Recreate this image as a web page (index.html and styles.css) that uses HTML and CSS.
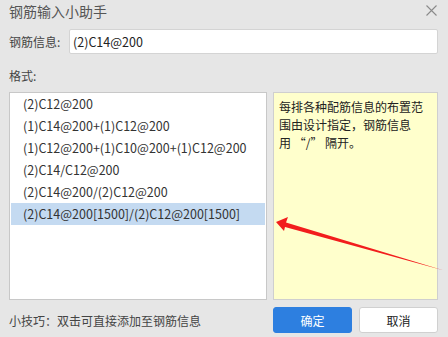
FILE: index.html
```html
<!DOCTYPE html>
<html lang="zh-CN">
<head>
  <meta charset="UTF-8">
  <title>钢筋输入小助手</title>
  <link rel="stylesheet" href="styles.css">
</head>
<body>
<div class="dialog">

  <!-- title bar -->
  <div class="title-bar">
    <span class="title">钢筋输入小助手</span>
    <svg class="close" width="11" height="11" viewBox="0 0 11 11">
      <path d="M0.5 0.5 L10.5 10.5 M10.5 0.5 L0.5 10.5" stroke="#8a8a8a" stroke-width="1.1" fill="none"/>
    </svg>
  </div>

  <div class="info-row">
    <label>钢筋信息:</label>
    <div class="input-box">(2)C14@200</div>
  </div>

  <div class="format-label">格式:</div>

  <div class="main">
    <ul class="format-list">
      <li>(2)C12@200</li>
      <li>(1)C14@200+(1)C12@200</li>
      <li>(1)C12@200+(1)C10@200+(1)C12@200</li>
      <li>(2)C14/C12@200</li>
      <li>(2)C14@200/(2)C12@200</li>
      <li class="selected">(2)C14@200[1500]/(2)C12@200[1500]</li>
    </ul>
    <div class="hint-box">每排各种配筋信息的布置范围由设计指定，钢筋信息<br>用 “/” 隔开。</div>

    <!-- red annotation arrow -->
    <svg class="arrow" width="190" height="70" viewBox="0 0 190 70">
      <path d="M11 10 L23 5 L21 10.5 L179 58.5 L20 15 L19 19 Z" fill="#f21d1d"/>
    </svg>
  </div>

  <div class="footer">
    <span class="tip">小技巧：双击可直接添加至钢筋信息</span>
    <div class="buttons">
      <button class="btn primary">确定</button>
      <button class="btn">取消</button>
    </div>
  </div>

</div>
</body>
</html>
```
FILE: styles.css
```css
body { margin: 0; background: #e6e6e6; font-family: "Noto Sans CJK SC", "Noto Sans", sans-serif; font-size: 12px; color: #333; }
.dialog { width: 448px; height: 337px; box-sizing: border-box; padding: 0 10px 0 9px; }

.title-bar { height: 21px; display: flex; align-items: center; justify-content: space-between; }
.title { color: #555; font-size: 14px; }
.close { margin-right: 1px; }

.info-row { display: flex; align-items: center; height: 25px; margin-top: 8px; }
.info-row label { width: 60px; color: #444; }
.input-box {
  flex: 1; height: 25px; box-sizing: border-box; background: #fff; border: 1px solid #d4d4d4;
  border-radius: 2px; padding: 0 3px; line-height: 23px; color: #222; font-size: 12.5px;
}

.format-label { margin-top: 13px; height: 25px; color: #444; }

.main { position: relative; display: flex; gap: 6px; height: 208px; }
.format-list {
  list-style: none; margin: 0; padding: 0 1px; width: 258px; box-sizing: border-box;
  background: #fff; border: 1px solid #c8c8c8;
}
.format-list li { height: 22px; line-height: 22px; padding-left: 12px; color: #333; white-space: nowrap; font-size: 12.5px; }
.format-list li.selected { background: #c4daf1; }

.hint-box {
  flex: 1; box-sizing: border-box; background: #ffffcc; border: 1px solid #cfcfcf;
  padding: 5px 6px 0 5px; line-height: 18px; color: #222;
}

.arrow { position: absolute; left: 256px; top: 120px; }

.footer { display: flex; align-items: center; justify-content: space-between; height: 40px; }
.tip { color: #444; }
.buttons { display: flex; gap: 7px; }
.btn {
  width: 79px; height: 26px; border-radius: 3px; border: 1px solid #d0d0d0; background: #fff;
  font-family: inherit; font-size: 12px; color: #222; padding: 0;
}
.btn.primary { background: #2d7fe0; border-color: #2d7fe0; color: #fff; }
```
